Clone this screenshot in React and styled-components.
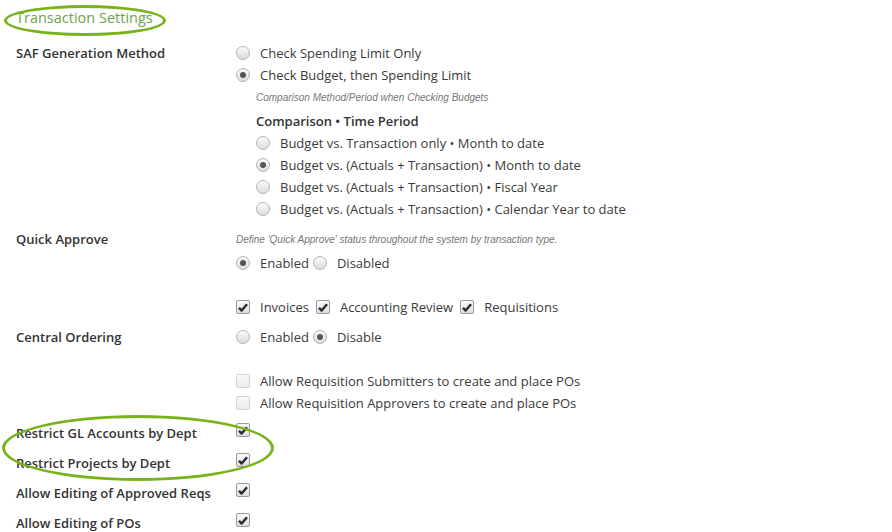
import React from "react";
import styled, { createGlobalStyle } from "styled-components";

const GlobalStyle = createGlobalStyle`
  html, body {
    margin: 0;
    background: #fff;
  }
  body {
    font-family: "Open Sans", "DejaVu Sans", sans-serif;
    color: #333;
  }
`;

const Page = styled.div`
  padding: 6px 0 0 16px;
  width: 892px;
  height: 532px;
  box-sizing: border-box;
  overflow: hidden;
`;

const HeadingWrap = styled.div`
  position: relative;
  display: inline-block;
  margin-bottom: 14px;
`;

const Heading = styled.h2`
  margin: 0;
  font-size: 14.5px;
  font-weight: 400;
  line-height: 20px;
  color: #6ea44a;
`;

const Ring = styled.div`
  position: absolute;
  left: ${(p) => p.$left}px;
  top: ${(p) => p.$top}px;
  width: ${(p) => p.$width}px;
  height: ${(p) => p.$height}px;
  border: 3.5px solid #78b31c;
  border-radius: 50%;
  box-sizing: border-box;
  pointer-events: none;
`;

const Row = styled.div`
  display: grid;
  grid-template-columns: 220px 1fr;
  margin-bottom: 8px;
`;

const Label = styled.div`
  font-size: 13px;
  font-weight: 600;
  line-height: 22px;
  color: #333;
`;

const Controls = styled.div`
  display: flex;
  flex-direction: column;
`;

const Line = styled.div`
  display: flex;
  align-items: center;
  height: 22px;
  font-size: 13px;
  color: #3a3a3a;
  white-space: nowrap;
`;

const Blank = styled.div`
  height: 22px;
`;

const Note = styled.div`
  height: 24px;
  line-height: 24px;
  font-family: "Liberation Sans", Arial, sans-serif;
  font-style: italic;
  font-size: 10px;
  color: #777;
  padding-left: ${(p) => p.$indent || 0}px;
  white-space: nowrap;
`;

const SubHead = styled.div`
  height: 22px;
  line-height: 22px;
  font-size: 13px;
  font-weight: 600;
  color: #333;
`;

const Sub = styled.div`
  display: flex;
  flex-direction: column;
  padding-left: 20px;
`;

const RadioDot = styled.span`
  flex: none;
  box-sizing: border-box;
  width: 14px;
  height: 14px;
  border-radius: 50%;
  border: 1px solid #b4b4b4;
  background: linear-gradient(#fbfbfb, #dcdcdc);
  margin-right: 10px;
  margin-left: ${(p) => (p.$first ? 0 : 4)}px;
  display: flex;
  align-items: center;
  justify-content: center;
  &::after {
    content: "";
    width: 6px;
    height: 6px;
    border-radius: 50%;
    background: #555;
    display: ${(p) => (p.$checked ? "block" : "none")};
  }
`;

const Box = styled.span`
  flex: none;
  box-sizing: border-box;
  width: 14px;
  height: 14px;
  border-radius: 2px;
  border: 1px solid ${(p) => (p.$checked ? "#9a9a9a" : "#d4d4d4")};
  background: ${(p) =>
    p.$checked ? "linear-gradient(#fafafa, #dedede)" : "linear-gradient(#f8f8f8, #ececec)"};
  margin-right: 10px;
  margin-left: ${(p) => (p.$first ? 0 : 7)}px;
  display: flex;
  align-items: center;
  justify-content: center;
`;

const TopAligned = styled.div`
  display: flex;
  align-items: flex-start;
  padding-top: 1px;
`;

const Group = styled.div`
  position: relative;
`;

function Radio({ checked, first }) {
  return <RadioDot $checked={checked} $first={first} />;
}

function Check({ checked, first }) {
  return (
    <Box $checked={checked} $first={first}>
      {checked && (
        <svg width="10" height="9" viewBox="0 0 10 9">
          <path d="M1 4.8 L3.6 7.6 L9 1.2" fill="none" stroke="#2b2b2b" strokeWidth="2.4" strokeLinejoin="round" />
        </svg>
      )}
    </Box>
  );
}

function CheckRow({ label }) {
  return (
    <Row>
      <Label>{label}</Label>
      <TopAligned>
        <Check checked first />
      </TopAligned>
    </Row>
  );
}

export default function App() {
  return (
    <Page>
      <GlobalStyle />
      <HeadingWrap>
        <Heading>Transaction Settings</Heading>
        <Ring $left={-12} $top={-3} $width={162} $height={31} />
      </HeadingWrap>

      <Row>
        <Label>SAF Generation Method</Label>
        <Controls>
          <Line><Radio first />Check Spending Limit Only</Line>
          <Line><Radio first checked />Check Budget, then Spending Limit</Line>
          <Note $indent={20}>Comparison Method/Period when Checking Budgets</Note>
          <Sub>
            <SubHead>Comparison • Time Period</SubHead>
            <Line><Radio first />Budget vs. Transaction only • Month to date</Line>
            <Line><Radio first checked />Budget vs. (Actuals + Transaction) • Month to date</Line>
            <Line><Radio first />Budget vs. (Actuals + Transaction) • Fiscal Year</Line>
            <Line><Radio first />Budget vs. (Actuals + Transaction) • Calendar Year to date</Line>
          </Sub>
        </Controls>
      </Row>

      <Row>
        <Label>Quick Approve</Label>
        <Controls>
          <Note>Define 'Quick Approve' status throughout the system by transaction type.</Note>
          <Line>
            <Radio first checked />Enabled
            <Radio />Disabled
          </Line>
          <Blank />
          <Line>
            <Check first checked />Invoices
            <Check checked />Accounting Review
            <Check checked />Requisitions
          </Line>
        </Controls>
      </Row>

      <Row>
        <Label>Central Ordering</Label>
        <Controls>
          <Line>
            <Radio first />Enabled
            <Radio checked />Disable
          </Line>
          <Blank />
          <Line><Check first />Allow Requisition Submitters to create and place POs</Line>
          <Line><Check first />Allow Requisition Approvers to create and place POs</Line>
        </Controls>
      </Row>

      <Group>
        <CheckRow label="Restrict GL Accounts by Dept" />
        <CheckRow label="Restrict Projects by Dept" />
        <Ring $left={-14} $top={-7} $width={272} $height={66} />
      </Group>
      <CheckRow label="Allow Editing of Approved Reqs" />
      <CheckRow label="Allow Editing of POs" />
    </Page>
  );
}
